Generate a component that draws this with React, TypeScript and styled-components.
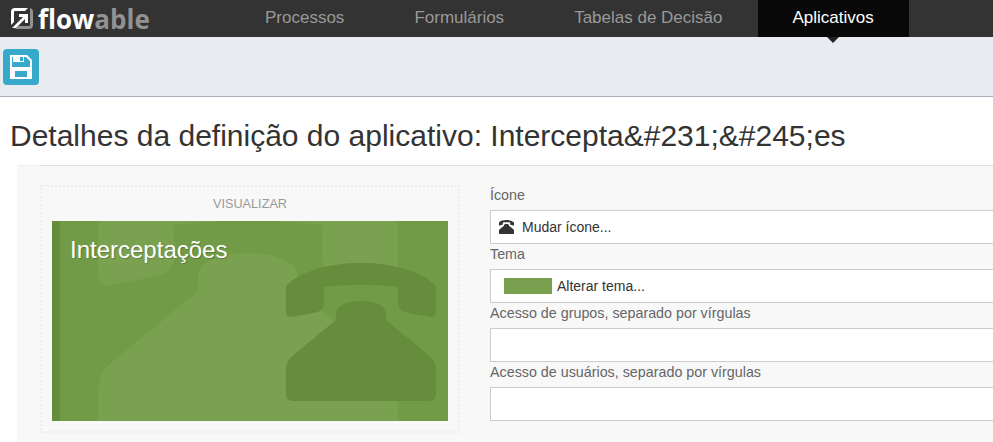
import React from 'react';
import styled, {createGlobalStyle} from 'styled-components';

const GlobalStyle = createGlobalStyle`
  html, body {
    margin: 0;
    padding: 0;
    background: #fff;
    overflow: hidden;
  }
  body {
    font-family: "Liberation Sans", Arial, sans-serif;
    color: #333;
  }
`;

const Page = styled.div`
  width: 993px;
  height: 442px;
  overflow: hidden;
`;

const NavBar = styled.nav`
  display: flex;
  height: 37px;
  background: #333;
`;

const Logo = styled.div`
  display: flex;
  align-items: center;
  gap: 5px;
  width: 230px;
  padding-left: 11px;
  box-sizing: border-box;
  flex-shrink: 0;
`;

const LogoText = styled.span`
  font-family: "Open Sans", sans-serif;
  font-size: 26px;
  font-weight: 700;
  line-height: 32px;
  color: #fff;

  b {
    font-weight: 700;
    color: #929292;
  }
`;

const NavItem = styled.a<{$active?: boolean}>`
  position: relative;
  display: block;
  padding: 0 35px;
  line-height: 35px;
  font-size: 17px;
  color: ${p => (p.$active ? '#fff' : '#999')};
  background: ${p => (p.$active ? '#080808' : 'transparent')};

  ${p =>
    p.$active &&
    `
    &::after {
      content: '';
      position: absolute;
      left: 50%;
      bottom: -6px;
      margin-left: -6px;
      border-style: solid;
      border-width: 6px 6px 0 6px;
      border-color: #222 transparent transparent transparent;
    }
  `}
`;

const Toolbar = styled.div`
  display: flex;
  align-items: flex-start;
  height: 60px;
  padding: 12px 3px 0;
  box-sizing: border-box;
  background: #e8ecf0;
  border-bottom: 1px solid #a8b0ba;
`;

const SaveButton = styled.button`
  display: flex;
  align-items: center;
  justify-content: center;
  width: 36px;
  height: 36px;
  padding: 0;
  border: none;
  border-radius: 4px;
  background: #37a9cb;
`;

const Title = styled.h1`
  margin: 0;
  padding: 22px 0 0 10px;
  height: 68px;
  box-sizing: border-box;
  font-size: 30px;
  font-weight: 400;
  line-height: 34px;
  color: #333;
  white-space: nowrap;
`;

const Panel = styled.section`
  position: relative;
  display: flex;
  margin-left: 17px;
  padding: 19px 0 0 23px;
  height: 277px;
  box-sizing: border-box;
  background: #f8f8f8;
  border-top: 1px solid #eee;

  &::before {
    content: '';
    position: absolute;
    top: -1px;
    left: 23px;
    right: 0;
    height: 1px;
    background: #ddd;
  }
`;

const PreviewBox = styled.div`
  width: 420px;
  height: 248px;
  box-sizing: border-box;
  flex-shrink: 0;
  padding: 0 10px;
  border: 2px dotted #eee;
`;

const PreviewLabel = styled.div`
  height: 34px;
  font-size: 12.7px;
  line-height: 35px;
  text-align: center;
  color: #999;
`;

const Card = styled.div`
  position: relative;
  height: 200px;
  overflow: hidden;
  background: #729b47;
  border-left: 8px solid #668d3c;
`;

const CardTitle = styled.div`
  position: relative;
  padding: 16px 0 0 10px;
  font-size: 24px;
  line-height: 26px;
  color: #fff;
  text-shadow: 1px 1px 1px rgba(0, 0, 0, 0.2);
`;

const BackPhone = styled.svg`
  position: absolute;
  left: 38px;
  top: -44px;
  width: 300px;
  height: 276px;
  fill: #7aa14f;
`;

const FrontPhone = styled.svg`
  position: absolute;
  left: 226px;
  top: 42px;
  width: 150px;
  height: 138px;
  fill: #668d3c;
`;

const Form = styled.div`
  flex-shrink: 0;
  width: 600px;
  margin-left: 30px;
`;

const FieldLabel = styled.label`
  display: block;
  height: 25px;
  font-size: 14.3px;
  line-height: 20px;
  color: #666;
`;

const FieldBox = styled.div`
  display: flex;
  align-items: center;
  height: 34px;
  box-sizing: border-box;
  padding: 0 8px;
  background: #fff;
  border: 1px solid #ccc;
  font-size: 14px;
  color: #333;
`;

const FieldIcon = styled.svg`
  width: 15px;
  height: 14px;
  margin-right: 8px;
  fill: #333;
`;

const Swatch = styled.span`
  width: 48px;
  height: 16px;
  margin: 0 5px;
  background: #7aa14f;
`;

const Handset = () => (
    <>
        <path d="M0 23 C14 8 44 0 75 0 C106 0 136 8 150 23 V49 Q150 54 145 54 L122 50 Q112 48 112 40 V24 C88 21 62 21 38 24 V40 Q38 48 28 50 L5 54 Q0 54 0 49 Z"/>
        <path d="M50 57 V50 C50 42 62 38 75 38 C88 38 100 42 100 50 V57 L146 95 Q150 100 150 107 V131 Q150 138 143 138 H7 Q0 138 0 131 V107 Q0 100 4 95 Z"/>
    </>
);

const App = () => {
    return (
        <Page>
            <GlobalStyle/>
            <NavBar>
                <Logo>
                    <svg width="22" height="21" viewBox="0 0 22 21">
                        <path fill="#fff" d="M4 0 H17 L14 3 H4 Q3 3 3 4 V14 L0 17 V4 Q0 0 4 0 Z"/>
                        <path fill="#fff" d="M1 20 L12 9 H8 V6 H17 V15 H14 V11 L5 20 Z"/>
                        <path fill="#929292" d="M18 0 Q22 0 22 4 V17 Q22 21 18 21 H4 L7 18 H18 Q19 18 19 17 V0 Z"/>
                    </svg>
                    <LogoText>flow<b>able</b></LogoText>
                </Logo>
                <NavItem>Processos</NavItem>
                <NavItem>Formulários</NavItem>
                <NavItem>Tabelas de Decisão</NavItem>
                <NavItem $active>Aplicativos</NavItem>
            </NavBar>

            <Toolbar>
                <SaveButton aria-label="Salvar">
                    <svg width="22" height="24" viewBox="0 0 22 24" fill="#fff">
                        <path fillRule="evenodd" d="M0 0 H17 L22 5 V24 H0 Z M2 2 V22 H20 V6 L16 2 Z"/>
                        <path fillRule="evenodd" d="M3 1 H14 V7 H3 Z M10 2 V6 H13 V2 Z"/>
                        <path fillRule="evenodd" d="M2 12 H20 V23 H2 Z M5 16 V22 H17 V16 Z"/>
                    </svg>
                </SaveButton>
            </Toolbar>

            <Title>Detalhes da definição do aplicativo: Intercepta&amp;#231;&amp;#245;es</Title>

            <Panel>
                <PreviewBox>
                    <PreviewLabel>VISUALIZAR</PreviewLabel>
                    <Card>
                        <BackPhone viewBox="0 0 150 138"><Handset/></BackPhone>
                        <FrontPhone viewBox="0 0 150 138"><Handset/></FrontPhone>
                        <CardTitle>Interceptações</CardTitle>
                    </Card>
                </PreviewBox>

                <Form>
                    <FieldLabel>Ícone</FieldLabel>
                    <FieldBox>
                        <FieldIcon viewBox="0 0 150 138"><Handset/></FieldIcon>
                        Mudar ícone...
                    </FieldBox>
                    <FieldLabel>Tema</FieldLabel>
                    <FieldBox>
                        <Swatch/>
                        Alterar tema...
                    </FieldBox>
                    <FieldLabel>Acesso de grupos, separado por vírgulas</FieldLabel>
                    <FieldBox/>
                    <FieldLabel>Acesso de usuários, separado por vírgulas</FieldLabel>
                    <FieldBox/>
                </Form>
            </Panel>
        </Page>
    );
};

export default App;
